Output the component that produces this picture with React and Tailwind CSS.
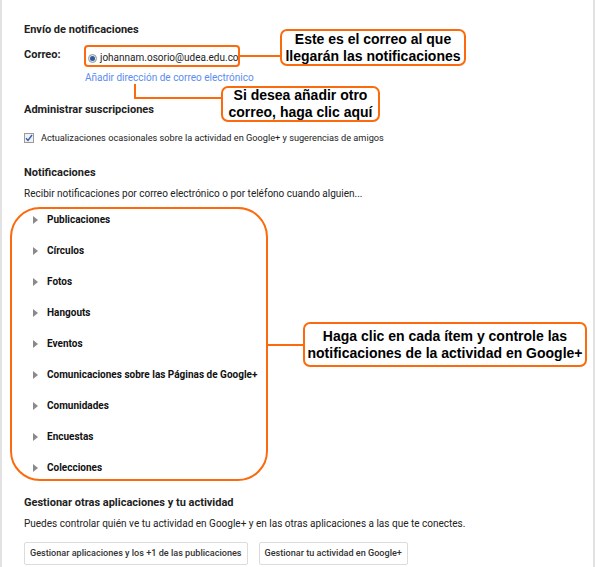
import React from 'react';

const ORANGE = 'border-[#fb6a0c]';

const items = [
  'Publicaciones',
  'Círculos',
  'Fotos',
  'Hangouts',
  'Eventos',
  'Comunicaciones sobre las Páginas de Google+',
  'Comunidades',
  'Encuestas',
  'Colecciones',
];

function Callout({ className, children }) {
  return (
    <div
      className={`absolute bg-white border-2 ${ORANGE} rounded-[7px] flex items-center justify-center text-center font-bold text-[14px] leading-[17px] text-black ${className}`}
      style={{ fontFamily: '"Liberation Sans", Arial, sans-serif' }}
    >
      {children}
    </div>
  );
}

export default function App() {
  return (
    <div
      className="relative w-[595px] h-[567px] bg-white border-l-2 border-r-2 border-[#e2e2e2] overflow-hidden text-[#222] text-[10px]"
      style={{ fontFamily: 'Roboto, "Liberation Sans", Arial, sans-serif' }}
    >
      <div className="pl-[22px] pt-[22px]">
        {/* Envío */}
        <h2 className="font-bold text-[11px] leading-[16px]">Envío de notificaciones</h2>
        <div className="flex items-start mt-[9px]">
          <span className="font-bold text-[11px] w-[62px] leading-[16px]">Correo:</span>
          <div className="flex flex-col">
            <div className="flex items-center gap-[3px] leading-[16px] pt-[3px] pl-[2px]">
              <span className="w-[9px] h-[9px] rounded-full border border-[#999] bg-[#dfe6ee] flex items-center justify-center">
                <span className="w-[5px] h-[5px] rounded-full bg-[#2b5c9b]" />
              </span>
              <span>johannam.osorio@udea.edu.co</span>
            </div>
            <a className="text-[#5b8def] leading-[16px] mt-[4px] -ml-[1px]">Añadir dirección de correo electrónico</a>
          </div>
        </div>

        {/* Suscripciones */}
        <h2 className="font-bold text-[11px] leading-[16px] mt-[16px]">Administrar suscripciones</h2>
        <label className="flex items-center gap-[7px] mt-[12px] leading-[16px]">
          <span className="w-[10px] h-[10px] border border-[#9a9a9a] bg-[#eef1f6] flex items-center justify-center">
            <svg width="8" height="8" viewBox="0 0 8 8">
              <path d="M1 4.2 L3 6.5 L7 1" fill="none" stroke="#3c5fa8" strokeWidth="1.4" />
            </svg>
          </span>
          <span className="text-[9.2px]">Actualizaciones ocasionales sobre la actividad en Google+ y sugerencias de amigos</span>
        </label>

        {/* Notificaciones */}
        <h2 className="font-bold text-[11px] leading-[16px] mt-[19px]">Notificaciones</h2>
        <p className="leading-[16px] mt-[5px]">Recibir notificaciones por correo electrónico o por teléfono cuando alguien...</p>

        <ul className="mt-[2px] pl-[9px]">
          {items.map((t) => (
            <li key={t} className="flex items-center h-[31px] gap-[9px] font-bold text-[10px] text-[#111]">
              <svg width="5" height="8" viewBox="0 0 5 8">
                <path d="M0 0 L5 4 L0 8 Z" fill="#8a8a8a" />
              </svg>
              <span>{t}</span>
            </li>
          ))}
        </ul>

        {/* Gestionar */}
        <h2 className="font-bold text-[11px] leading-[16px] mt-[12px]">Gestionar otras aplicaciones y tu actividad</h2>
        <p className="leading-[16px] mt-[5px]">Puedes controlar quién ve tu actividad en Google+ y en las otras aplicaciones a las que te conectes.</p>
        <div className="flex gap-[11px] mt-[10px]">
          <button className="h-[23px] px-[5px] border border-[#dcdcdc] rounded-[2px] bg-white font-medium text-[9.1px] text-[#333]">
            Gestionar aplicaciones y los +1 de las publicaciones
          </button>
          <button className="h-[23px] px-[5px] border border-[#dcdcdc] rounded-[2px] bg-white font-medium text-[9.1px] text-[#333]">
            Gestionar tu actividad en Google+
          </button>
        </div>
      </div>

      {/* Annotations */}
      <div className={`absolute left-[82px] top-[45px] w-[156px] h-[22px] border-2 ${ORANGE} rounded-[4px]`} />
      <div className="absolute left-[236px] top-[55px] w-[44px] h-[2px] bg-[#fb6a0c]" />
      <Callout className="left-[278px] top-[29px] w-[186px] h-[37px]">
        Este es el correo al que<br />llegarán las notificaciones
      </Callout>

      <div className="absolute left-[132px] top-[84px] w-[2px] h-[15px] bg-[#fb6a0c]" />
      <div className="absolute left-[132px] top-[97px] w-[90px] h-[2px] bg-[#fb6a0c]" />
      <Callout className="left-[219px] top-[86px] w-[159px] h-[36px]">
        Si desea añadir otro<br />correo, haga clic aquí
      </Callout>

      <div className={`absolute left-[8px] top-[207px] w-[258px] h-[274px] border-2 ${ORANGE} rounded-[30px]`} />
      <div className="absolute left-[264px] top-[344px] w-[40px] h-[2px] bg-[#fb6a0c]" />
      <Callout className="left-[301px] top-[322px] w-[284px] h-[45px]">
        Haga clic en cada ítem y controle las<br />notificaciones de la actividad en Google+
      </Callout>
    </div>
  );
}
